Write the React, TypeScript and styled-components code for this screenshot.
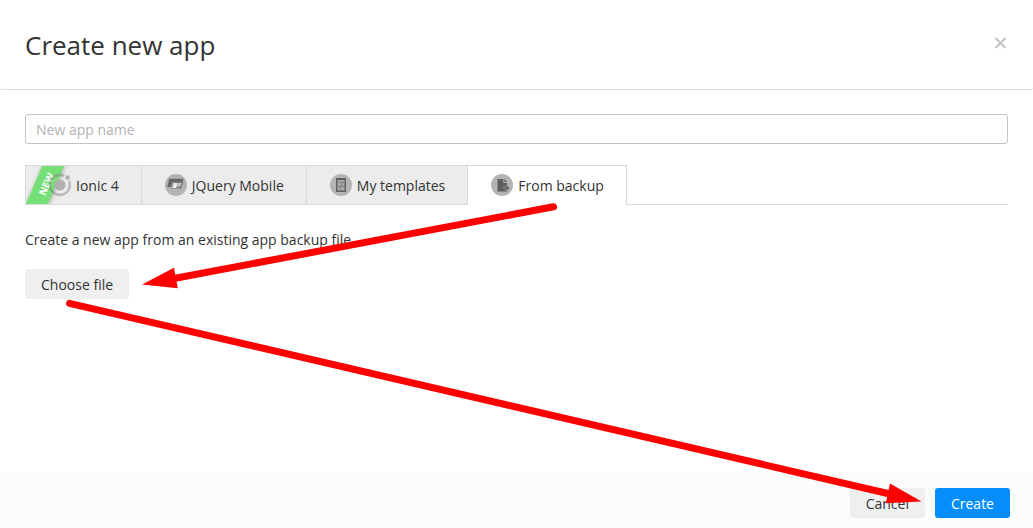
import { useState } from "react";
import styled, { createGlobalStyle } from "styled-components";

const GlobalStyle = createGlobalStyle`
	* {
		box-sizing: border-box;
	}
	body {
		margin: 0;
		background: #fff;
		color: #333;
		font-family: "Open Sans", "Liberation Sans", sans-serif;
		font-size: 14px;
		line-height: 20px;
	}
`;

const Modal = styled.div`
	position: relative;
	display: flex;
	flex-direction: column;
	height: 528px;
	overflow: hidden;
`;

const Header = styled.header`
	display: flex;
	justify-content: space-between;
	height: 90px;
	padding: 27px 26px 0 25px;
	border-bottom: 1px solid #ddd;
	border-radius: 3px;
`;

const Title = styled.h1`
	margin: 0;
	font-size: 26px;
	font-weight: 400;
	line-height: 36px;
`;

const CloseButton = styled.button`
	display: flex;
	align-self: flex-start;
	margin-top: 10px;
	padding: 0;
	border: 0;
	background: none;
`;

const Body = styled.main`
	flex: 1;
	padding: 24px 25px 0;
`;

const NameInput = styled.input`
	display: block;
	width: 100%;
	height: 30px;
	padding: 1px 10px 0;
	border: 1px solid #c4c4c4;
	border-radius: 3px;
	font: inherit;
	color: inherit;
	outline: none;
	&::placeholder {
		color: #b3b3b3;
		opacity: 1;
	}
`;

const TabList = styled.div`
	display: flex;
	margin-top: 21px;
	height: 40px;
	border-bottom: 1px solid #d9d9d9;
`;

const TabButton = styled.button<{ $active: boolean }>`
	position: relative;
	display: flex;
	align-items: center;
	gap: 5px;
	height: ${(props) => (props.$active ? "40px" : "39px")};
	padding: ${(props) => (props.$active ? "1px 22px 0 23px" : "2px 22px 0 23px")};
	border: 1px solid #d9d9d9;
	border-width: ${(props) => (props.$active ? "1px 1px 0" : "1px 0 0 1px")};
	background: ${(props) => (props.$active ? "#fff" : "#ececec")};
	color: inherit;
	font: inherit;
	white-space: nowrap;
	svg {
		position: relative;
		display: block;
		flex: none;
		margin-bottom: 2px;
	}
`;

const Ribbon = styled.span`
	position: absolute;
	top: 0;
	left: 0;
	width: 46px;
	height: 38px;
	overflow: hidden;
	&::before {
		content: "";
		position: absolute;
		top: 0;
		left: 8px;
		width: 22px;
		height: 38px;
		background: #76df78;
		box-shadow: 1px 0 4px rgba(0, 0, 0, 0.3);
		transform: skewX(-23deg);
	}
`;

const RibbonText = styled.span`
	position: absolute;
	top: 12px;
	left: 5px;
	width: 30px;
	color: #fff;
	font-size: 10px;
	font-weight: 700;
	line-height: 12px;
	text-align: center;
	transform: rotate(-66deg);
`;

const Description = styled.p`
	margin: 25px 0 19px;
`;

const Button = styled.button<{ $primary?: boolean }>`
	height: 30px;
	padding: 1px 16px 0;
	border: 0;
	border-radius: 3px;
	background: ${(props) => (props.$primary ? "#058efb" : "#efefef")};
	color: ${(props) => (props.$primary ? "#fff" : "inherit")};
	font: inherit;
`;

const Footer = styled.footer`
	display: flex;
	justify-content: flex-end;
	gap: 10px;
	height: 55px;
	padding: 15px 23px 0;
	background: #fcfcfc;
`;

const Arrows = styled.svg`
	position: absolute;
	inset: 0;
	pointer-events: none;
`;

const IonicIcon = () => (
	<svg width="22" height="24" viewBox="0 0 22 24">
		<path
			d="M15.2 2.9A10 10 0 1 0 20 7.9"
			fill="none"
			stroke="#777"
			strokeOpacity="0.42"
			strokeWidth="2.6"
		/>
		<circle cx="11" cy="12" r="5.6" fill="#b1b1b1" />
		<circle cx="18.6" cy="4.6" r="2.3" fill="#b1b1b1" />
	</svg>
);

const JQueryIcon = () => (
	<svg width="22" height="22" viewBox="0 0 22 22">
		<circle cx="11" cy="11" r="11" fill="#b4b4b4" />
		<path d="M4.2 4.8h14.3l-.8 3.6H7.2l-1.5 4.6H2.3z" fill="#666" />
		<path d="M7.4 8.4h4.3l-1.9 6.4H5.4z" fill="#999" />
		<path d="M10.2 7.4h8.1l-2 7H9.2z" fill="#757575" />
		<path d="M8.8 9h3.7l-1.1 4.9H7.6z" fill="#eee" />
		<path d="M12.4 8.8h4.3l-1.3 4h-4z" fill="#bababa" />
	</svg>
);

const TemplatesIcon = () => (
	<svg width="22" height="22" viewBox="0 0 22 22">
		<circle cx="11" cy="11" r="11" fill="#b4b4b4" />
		<rect x="6" y="4" width="10" height="14" fill="#5f5f5f" />
		<rect x="7.5" y="6" width="7" height="10.5" fill="#a9a9a9" />
		<path
			d="M7.5 8.5h7M7.5 12.5h7M11.5 9v3.5M10.5 13v3"
			stroke="#858585"
			strokeWidth="1"
		/>
	</svg>
);

const BackupIcon = () => (
	<svg width="22" height="22" viewBox="0 0 22 22">
		<circle cx="11" cy="11" r="11" fill="#b4b4b4" />
		<path d="M6.5 5h5.8v4h3.8v8.5H6.5z" fill="#5f5f5f" />
		<path d="M13.2 4.8 16.2 8h-3z" fill="#686868" />
		<path d="M12.6 12.8h2.8v-1.6l3.6 2.8-3.6 2.9v-1.7h-2.8z" fill="#b4b4b4" />
		<path d="M13 13.3h2.8v-1.5l2.8 2.3-2.8 2.3v-1.6H13z" fill="#5f5f5f" />
	</svg>
);

const tabs = [
	{ key: "ionic", label: "Ionic 4", icon: <IonicIcon />, isNew: true },
	{ key: "jquery", label: "JQuery Mobile", icon: <JQueryIcon /> },
	{ key: "templates", label: "My templates", icon: <TemplatesIcon /> },
	{ key: "backup", label: "From backup", icon: <BackupIcon /> },
];

function App() {
	const [activeTab, setActiveTab] = useState("backup");
	const [name, setName] = useState("");

	return (
		<>
			<GlobalStyle />
			<Modal>
				<Header>
					<Title>Create new app</Title>
					<CloseButton aria-label="Close">
						<svg width="13" height="12" viewBox="0 0 13 12">
							<path
								d="M1.5 1 11.5 11M11.5 1 1.5 11"
								stroke="#c5c5c5"
								strokeWidth="2.2"
							/>
						</svg>
					</CloseButton>
				</Header>
				<Body>
					<NameInput
						placeholder="New app name"
						value={name}
						onChange={(event) => setName(event.target.value)}
					/>
					<TabList role="tablist">
						{tabs.map((tab) => (
							<TabButton
								key={tab.key}
								role="tab"
								$active={tab.key === activeTab}
								onClick={() => setActiveTab(tab.key)}
							>
								{tab.isNew && (
									<Ribbon>
										<RibbonText>NEW</RibbonText>
									</Ribbon>
								)}
								{tab.icon}
								{tab.label}
							</TabButton>
						))}
					</TabList>
					<Description>
						Create a new app from an existing app backup file.
					</Description>
					<Button>Choose file</Button>
				</Body>
				<Footer>
					<Button>Cancel</Button>
					<Button $primary>Create</Button>
				</Footer>
				<Arrows width="1033" height="528" viewBox="0 0 1033 528">
					<g stroke="#f00" strokeWidth="7" strokeLinecap="round">
						<path d="M553.5 206.8 174 278.5" />
						<path d="M69.5 303.3 890 494" />
					</g>
					<path d="M142 284.5 174 267.7 177.8 288.2z" fill="#f00" />
					<path d="M921.5 501.5 890 483.5 885.8 503.3z" fill="#f00" />
				</Arrows>
			</Modal>
		</>
	);
}

export default App;
